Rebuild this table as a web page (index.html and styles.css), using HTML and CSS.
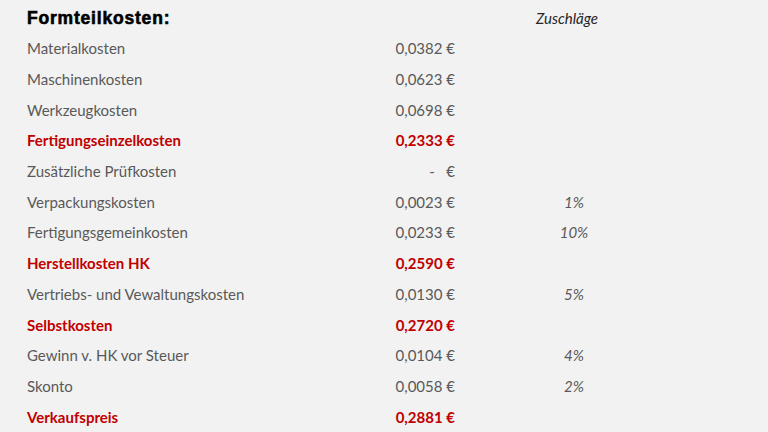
FILE: index.html
```html
<!DOCTYPE html>
<html lang="de">
<head>
<meta charset="utf-8">
<link rel="stylesheet" href="styles.css">
</head>
<body>
<div class="sheet">
  <div class="head">
    <div class="title">Formteilkosten:</div>
    <div class="zu">Zuschläge</div>
  </div>
  <div class="grid">
    <div class="row"><span class="lbl">Materialkosten</span><span class="val">0,0382 €</span><span class="pct"></span></div>
    <div class="row"><span class="lbl">Maschinenkosten</span><span class="val">0,0623 €</span><span class="pct"></span></div>
    <div class="row"><span class="lbl">Werkzeugkosten</span><span class="val">0,0698 €</span><span class="pct"></span></div>
    <div class="row sum"><span class="lbl">Fertigungseinzelkosten</span><span class="val">0,2333 €</span><span class="pct"></span></div>
    <div class="row"><span class="lbl">Zusätzliche Prüfkosten</span><span class="val">-&nbsp;&nbsp;&nbsp;€</span><span class="pct"></span></div>
    <div class="row"><span class="lbl">Verpackungskosten</span><span class="val">0,0023 €</span><span class="pct">1%</span></div>
    <div class="row"><span class="lbl">Fertigungsgemeinkosten</span><span class="val">0,0233 €</span><span class="pct">10%</span></div>
    <div class="row sum"><span class="lbl">Herstellkosten HK</span><span class="val">0,2590 €</span><span class="pct"></span></div>
    <div class="row"><span class="lbl">Vertriebs- und Vewaltungskosten</span><span class="val">0,0130 €</span><span class="pct">5%</span></div>
    <div class="row sum"><span class="lbl">Selbstkosten</span><span class="val">0,2720 €</span><span class="pct"></span></div>
    <div class="row"><span class="lbl">Gewinn v. HK vor Steuer</span><span class="val">0,0104 €</span><span class="pct">4%</span></div>
    <div class="row"><span class="lbl">Skonto</span><span class="val">0,0058 €</span><span class="pct">2%</span></div>
    <div class="row sum"><span class="lbl">Verkaufspreis</span><span class="val">0,2881 €</span><span class="pct"></span></div>
  </div>
</div>
</body>
</html>
```

FILE: styles.css
```css
html, body {
  margin: 0;
  padding: 0;
  background: #f2f2f2;
}
body {
  width: 768px;
  height: 432px;
  overflow: hidden;
  font-family: "Lato", "Open Sans", sans-serif;
  color: #595959;
}
.sheet {
  padding: 3px 0 0 27px;
}
.head {
  display: grid;
  grid-template-columns: 428px 224px;
  height: 30px;
  align-items: center;
}
.title {
  font-family: "Liberation Sans", Arial, sans-serif;
  font-weight: bold;
  font-size: 17.5px;
  color: #000;
  -webkit-text-stroke: 0.6px #000;
  letter-spacing: 0.8px;
}
.zu {
  font-style: italic;
  font-size: 15px;
  color: #262626;
  text-align: center;
}
.grid {
  display: flex;
  flex-direction: column;
}
.row {
  display: grid;
  grid-template-columns: 300px 128px 238px;
  height: 30.7px;
  align-items: center;
  font-size: 15px;
}
.val {
  text-align: right;
}
.pct {
  text-align: center;
  font-style: italic;
}
.sum {
  color: #c00000;
  font-weight: bold;
}
```
